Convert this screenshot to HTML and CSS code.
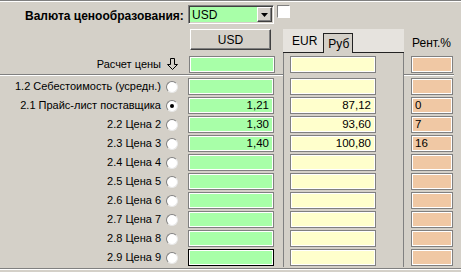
FILE: index.html
```html
<!DOCTYPE html>
<html lang="ru">
<head>
    <meta charset="UTF-8">
    <title>Валюта ценообразования</title>
    <link rel="stylesheet" href="styles.css">
</head>
<body>
<div class="form">

    <div class="topbar">
        <span class="title">Валюта ценообразования:</span>
        <div class="combo">
            <span class="combo-value">USD</span>
            <span class="combo-btn">
                <svg width="7" height="4" viewBox="0 0 7 4"><path d="M0 0H7L3.5 4Z" fill="#000"/></svg>
            </span>
        </div>
        <span class="check"></span>
    </div>

    <div class="main">
        <!-- left: labels, radios, USD fields -->
        <div class="left">
            <div class="head-row"><span class="btn">USD</span></div>
            <div class="calc-row">
                <span class="label">Расчет цены</span>
                <span class="mark">
                    <svg width="11" height="13" viewBox="0 0 11 13"><path d="M3.5 0.5H7.5V6.5H10.5L5.5 11.5L0.5 6.5H3.5Z" fill="none" stroke="#000"/></svg>
                </span>
                <span class="field green"></span>
            </div>
            <div class="sep"></div>
            <div class="row"><span class="label">1.2 Себестоимость (усредн.)</span><span class="radio"></span><span class="field green"></span></div>
            <div class="row"><span class="label">2.1 Прайс-лист поставщика</span><span class="radio on"></span><span class="field green">1,21</span></div>
            <div class="row"><span class="label">2.2 Цена 2</span><span class="radio"></span><span class="field green">1,30</span></div>
            <div class="row"><span class="label">2.3 Цена 3</span><span class="radio"></span><span class="field green">1,40</span></div>
            <div class="row"><span class="label">2.4 Цена 4</span><span class="radio"></span><span class="field green"></span></div>
            <div class="row"><span class="label">2.5 Цена 5</span><span class="radio"></span><span class="field green"></span></div>
            <div class="row"><span class="label">2.6 Цена 6</span><span class="radio"></span><span class="field green"></span></div>
            <div class="row"><span class="label">2.7 Цена 7</span><span class="radio"></span><span class="field green"></span></div>
            <div class="row"><span class="label">2.8 Цена 8</span><span class="radio"></span><span class="field green"></span></div>
            <div class="row"><span class="label">2.9 Цена 9</span><span class="radio"></span><span class="field green focus"></span></div>
        </div>

        <!-- middle: tabbed panel with converted prices -->
        <div class="panel">
            <div class="tabs">
                <span class="tab">EUR</span>
                <span class="tab active">Руб</span>
            </div>
            <div class="panel-body">
                <div class="calc-row"><span class="field yellow"></span></div>
                <div class="gap"></div>
                <div class="row"><span class="field yellow"></span></div>
                <div class="row"><span class="field yellow">87,12</span></div>
                <div class="row"><span class="field yellow">93,60</span></div>
                <div class="row"><span class="field yellow">100,80</span></div>
                <div class="row"><span class="field yellow"></span></div>
                <div class="row"><span class="field yellow"></span></div>
                <div class="row"><span class="field yellow"></span></div>
                <div class="row"><span class="field yellow"></span></div>
                <div class="row"><span class="field yellow"></span></div>
                <div class="row"><span class="field yellow"></span></div>
            </div>
        </div>

        <!-- right: profitability -->
        <div class="right">
            <div class="head-row head-text">Рент.%</div>
            <div class="calc-row"><span class="field peach"></span></div>
            <div class="sep"></div>
            <div class="row"><span class="field peach"></span></div>
            <div class="row"><span class="field peach">0</span></div>
            <div class="row"><span class="field peach">7</span></div>
            <div class="row"><span class="field peach">16</span></div>
            <div class="row"><span class="field peach"></span></div>
            <div class="row"><span class="field peach"></span></div>
            <div class="row"><span class="field peach"></span></div>
            <div class="row"><span class="field peach"></span></div>
            <div class="row"><span class="field peach"></span></div>
            <div class="row"><span class="field peach"></span></div>
        </div>
    </div>

    <div class="bottom-rule"></div>
</div>
</body>
</html>
```

FILE: styles.css
```css
body {
    margin: 0;
    padding: 0;
    background: #d4d0c8;
    font-family: "Liberation Sans", Arial, sans-serif;
    font-size: 11px;
    color: #000;
}

.form {
    width: 461px;
    height: 272px;
    overflow: hidden;
    border-top: 1px solid #808080;
    box-sizing: border-box;
}

/* top bar */
.topbar {
    height: 28px;
    border-top: 1px solid #fff;
    box-sizing: border-box;
    display: flex;
    align-items: flex-start;
}

.title {
    font-weight: bold;
    font-size: 12px;
    margin: 7px 0 0 25px;
    width: 163px;
}

.combo {
    margin-top: 3px;
    width: 86px;
    height: 19px;
    box-sizing: border-box;
    border: 1px solid;
    border-color: #808080 #fff #fff #808080;
    box-shadow: inset 1px 1px 0 #404040, inset -1px -1px 0 #d4d0c8;
    background: #a8ffa8;
    display: flex;
    align-items: center;
    padding: 0 1px 0 3px;
}

.combo-value {
    flex: 1;
    font-size: 12px;
}

.combo-btn {
    width: 15px;
    height: 15px;
    box-sizing: border-box;
    background: #d4d0c8;
    border: 1px solid;
    border-color: #fff #404040 #404040 #fff;
    box-shadow: inset -1px -1px 0 #808080;
    display: flex;
    align-items: center;
    justify-content: center;
}

.check {
    margin: 3px 0 0 3px;
    width: 13px;
    height: 13px;
    box-sizing: border-box;
    background: #fff;
    border: 1px solid;
    border-color: #808080 #fff #fff #808080;
}

/* columns */
.main {
    display: flex;
}

.left {
    width: 283px;
}

.panel {
    width: 121px;
}

.right {
    width: 57px;
}

.head-row {
    height: 23px;
    box-sizing: border-box;
}

.calc-row {
    height: 22px;
    box-sizing: border-box;
    padding-top: 4px;
    display: flex;
    align-items: flex-start;
}

.row {
    height: 19px;
    box-sizing: border-box;
    padding-top: 2px;
    display: flex;
    align-items: flex-start;
}

.sep {
    height: 2px;
    border-top: 1px solid #808080;
    border-bottom: 1px solid #fff;
    box-sizing: border-box;
}

.gap {
    height: 2px;
}

.label {
    width: 161px;
    text-align: right;
    line-height: 17px;
    white-space: nowrap;
}

.mark {
    width: 11px;
    height: 13px;
    margin: 2px 0 0 6px;
}

.mark svg {
    display: block;
}

.radio {
    width: 12px;
    height: 12px;
    margin: 3px 0 0 5px;
    box-sizing: border-box;
    border-radius: 50%;
    background: #fff;
    border: 1px solid;
    border-color: #808080 #e8e8e8 #e8e8e8 #808080;
    position: relative;
}

.radio.on::after {
    content: "";
    position: absolute;
    left: 3px;
    top: 3px;
    width: 4px;
    height: 4px;
    border-radius: 50%;
    background: #000;
}

/* edit fields */
.field {
    width: 86px;
    height: 17px;
    box-sizing: border-box;
    border: 1px solid #808080;
    box-shadow: inset 0 0 0 1px #fff;
    padding: 0 4px;
    line-height: 15px;
    text-align: right;
    font-size: 11.5px;
}

.left .field {
    margin-left: 10px;
}

.calc-row .mark + .field {
    margin-left: 11px;
}

.green {
    background: #a8ffa8;
}

.green.focus {
    border-color: #000;
}

.yellow {
    background: #ffffcc;
    margin-left: 6px;
}

.peach {
    background: #f0c8a4;
    width: 42px;
    margin-left: 7px;
    text-align: left;
    padding: 0 3px;
}

/* USD button */
.btn {
    display: flex;
    align-items: center;
    justify-content: center;
    margin-left: 190px;
    width: 81px;
    height: 21px;
    box-sizing: border-box;
    border: 1px solid;
    border-color: #fff #404040 #404040 #fff;
    box-shadow: inset -1px -1px 0 #808080;
    font-size: 12px;
}

/* tabs */
.tabs {
    height: 24px;
    box-sizing: border-box;
    background: #e6e3de;
    border-bottom: 1px solid #222;
    display: flex;
    align-items: flex-end;
    padding-left: 9px;
}

.tab {
    font-size: 12px;
    line-height: 15px;
    padding-bottom: 3px;
}

.tab.active {
    margin-left: 6px;
    margin-bottom: -1px;
    width: 30px;
    height: 20px;
    box-sizing: border-box;
    border: 1px solid #222;
    border-bottom: none;
    background: #d4d0c8;
    padding: 3px 0 0 4px;
}

.panel-body {
    border-left: 1px solid #808080;
    border-right: 1px solid #808080;
    height: 214px;
}

.panel-body .calc-row {
    height: 21px;
    padding-top: 3px;
}

.head-text {
    padding: 7px 0 0 8px;
    font-size: 12px;
}

.right .sep {
    width: 50px;
}

.bottom-rule {
    height: 2px;
    border-top: 1px solid #808080;
    border-bottom: 1px solid #fff;
    box-sizing: border-box;
    margin-top: 1px;
}
```
